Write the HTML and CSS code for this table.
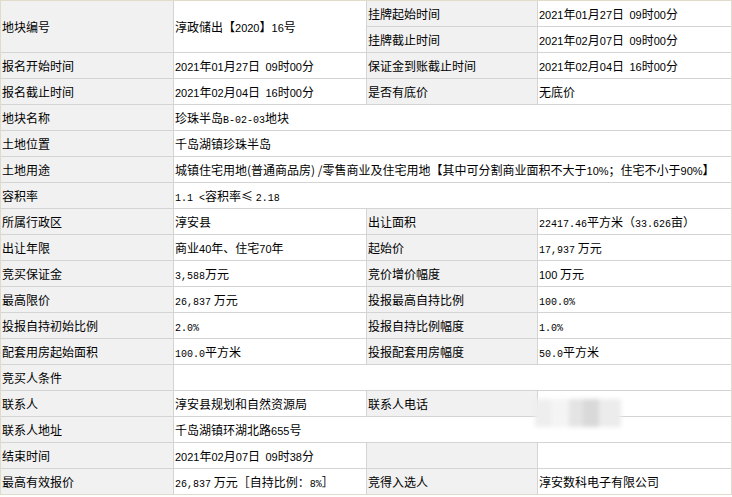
FILE: index.html
```html
<!DOCTYPE html>
<html lang="zh-CN">
<head>
<meta charset="utf-8">
<title>地块信息</title>
<link rel="stylesheet" href="styles.css">
</head>
<body>
<div class="sheet">
  <div class="c lab r2">地块编号</div>
  <div class="c val r2">淳政储出【<span class="n">2020</span>】<span class="n">16</span>号</div>
  <div class="c lab">挂牌起始时间</div>
  <div class="c val"><span class="n">2021</span>年<span class="n">01</span>月<span class="n">27</span>日&nbsp;&nbsp;<span class="n">09</span>时<span class="n">00</span>分</div>
  <div class="c lab">挂牌截止时间</div>
  <div class="c val"><span class="n">2021</span>年<span class="n">02</span>月<span class="n">07</span>日&nbsp;&nbsp;<span class="n">09</span>时<span class="n">00</span>分</div>

  <div class="c lab">报名开始时间</div>
  <div class="c val"><span class="n">2021</span>年<span class="n">01</span>月<span class="n">27</span>日&nbsp;&nbsp;<span class="n">09</span>时<span class="n">00</span>分</div>
  <div class="c lab">保证金到账截止时间</div>
  <div class="c val"><span class="n">2021</span>年<span class="n">02</span>月<span class="n">04</span>日&nbsp;&nbsp;<span class="n">16</span>时<span class="n">00</span>分</div>

  <div class="c lab">报名截止时间</div>
  <div class="c val"><span class="n">2021</span>年<span class="n">02</span>月<span class="n">04</span>日&nbsp;&nbsp;<span class="n">16</span>时<span class="n">00</span>分</div>
  <div class="c lab">是否有底价</div>
  <div class="c val">无底价</div>

  <div class="c lab">地块名称</div>
  <div class="c val s3">珍珠半岛<span class="m">B-02-03</span>地块</div>

  <div class="c lab">土地位置</div>
  <div class="c val s3">千岛湖镇珍珠半岛</div>

  <div class="c lab">土地用途</div>
  <div class="c val s3">城镇住宅用地(普通商品房) /零售商业及住宅用地【其中可分割商业面积不大于<span class="n">10%</span>；住宅不小于<span class="n">90%</span>】</div>

  <div class="c lab">容积率</div>
  <div class="c val s3"><span class="m">1.1 &lt;</span>容积率≤ <span class="m">2.18</span></div>

  <div class="c lab">所属行政区</div>
  <div class="c val">淳安县</div>
  <div class="c lab">出让面积</div>
  <div class="c val"><span class="m">22417.46</span>平方米（<span class="m">33.626</span>亩）</div>

  <div class="c lab">出让年限</div>
  <div class="c val">商业<span class="n">40</span>年、住宅<span class="n">70</span>年</div>
  <div class="c lab">起始价</div>
  <div class="c val"><span class="m">17,937</span> 万元</div>

  <div class="c lab">竞买保证金</div>
  <div class="c val"><span class="m">3,588</span>万元</div>
  <div class="c lab">竞价增价幅度</div>
  <div class="c val"><span class="n">100</span> 万元</div>

  <div class="c lab">最高限价</div>
  <div class="c val"><span class="m">26,837</span> 万元</div>
  <div class="c lab">投报最高自持比例</div>
  <div class="c val"><span class="m">100.0%</span></div>

  <div class="c lab">投报自持初始比例</div>
  <div class="c val"><span class="m">2.0%</span></div>
  <div class="c lab">投报自持比例幅度</div>
  <div class="c val"><span class="m">1.0%</span></div>

  <div class="c lab">配套用房起始面积</div>
  <div class="c val"><span class="m">100.0</span>平方米</div>
  <div class="c lab">投报配套用房幅度</div>
  <div class="c val"><span class="m">50.0</span>平方米</div>

  <div class="c lab">竞买人条件</div>
  <div class="c val s3"></div>

  <div class="c lab">联系人</div>
  <div class="c val">淳安县规划和自然资源局</div>
  <div class="c lab">联系人电话</div>
  <div class="c val"><span class="blur" aria-hidden="true"><i class="b1"></i><i class="b2"></i><i class="b3"></i><i class="b4"></i><i class="b5"></i></span></div>

  <div class="c lab">联系人地址</div>
  <div class="c val s3">千岛湖镇环湖北路<span class="n">655</span>号</div>

  <div class="c lab">结束时间</div>
  <div class="c val"><span class="n">2021</span>年<span class="n">02</span>月<span class="n">07</span>日&nbsp;&nbsp;<span class="n">09</span>时<span class="n">38</span>分</div>
  <div class="c lab"></div>
  <div class="c val"></div>

  <div class="c lab">最高有效报价</div>
  <div class="c val"><span class="m">26,837</span> 万元［自持比例：<span class="m">8%</span>］</div>
  <div class="c lab">竞得入选人</div>
  <div class="c val">淳安数科电子有限公司</div>
</div>
</body>
</html>
```

FILE: styles.css
```css
html, body {
  margin: 0;
  padding: 0;
  background: #ffffff;
}

body {
  font-family: "Noto Sans CJK SC", "Noto Sans", sans-serif;
  font-size: 12px;
  color: #000000;
}

.sheet {
  width: 730px;
  border: 1px solid #e2dbcb;
  background: #d4d4d4;
  display: grid;
  grid-template-columns: 172px 192px 170px 193px;
  grid-auto-rows: 25px;
  gap: 1px;
}

.c {
  display: block;
  padding: 0 0 0 1px;
  white-space: pre;
  line-height: 25px;
  overflow: visible;
}

.lab {
  background: #f1f1f1;
}

.val {
  background: #ffffff;
}

.r2 {
  grid-row: span 2;
  line-height: 51px;
}

.s3 {
  grid-column: span 3;
}

.n {
  font-family: "Liberation Sans", sans-serif;
  font-size: 11px;
}

.m {
  font-family: "Liberation Mono", monospace;
  font-size: 10px;
}

.blur {
  display: inline-flex;
  width: 86px;
  height: 28px;
  margin-left: -4px;
  vertical-align: -18px;
  filter: blur(2px);
}

.blur i {
  display: block;
  height: 100%;
}

.b1 { width: 16px; background: #eeeeee; }
.b2 { width: 18px; background: #f4f4f4; }
.b3 { width: 14px; background: #e4e4e4; }
.b4 { width: 16px; background: #d9d9d9; }
.b5 { width: 22px; background: #ececec; }
```
